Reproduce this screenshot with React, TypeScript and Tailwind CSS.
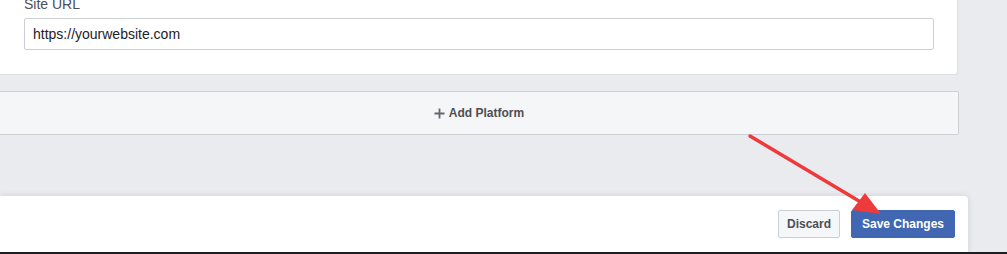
import React from 'react';

export default function App() {
    return (
        <div className="relative w-[1007px] h-[254px] overflow-hidden bg-[#e9ebee] font-['Liberation_Sans',Arial,sans-serif]">
            <div className="flex flex-col">

                {/* App settings card, scrolled so the label is clipped */}
                <div className="w-[958px] h-[75px] bg-white border border-t-0 border-l-0 border-[#dddfe2] rounded-br-[3px] px-6">
                    <div className="mt-[-4px] text-[14px] leading-[16px] text-[#4b4f56]">Site URL</div>
                    <div className="mt-[6px] h-[32px] w-[910px] border border-[#ccd0d5] rounded-[2px] flex items-center px-2 text-[14px] text-[#1d2129]">
                        https://yourwebsite.com
                    </div>
                </div>

                <button className="mt-[16px] w-[959px] h-[44px] bg-[#f5f6f7] border border-l-0 border-[#ccd0d5] rounded-r-[2px] flex items-center justify-center gap-1 text-[12px] font-bold text-[#4b4f56]">
                    <svg width="11" height="11" viewBox="0 0 11 11" className="mt-[1px]">
                        <path d="M5.5 0.5v10M0.5 5.5h10" stroke="#606770" strokeWidth="1.8" />
                    </svg>
                    <span>Add Platform</span>
                </button>

                {/* Sticky save bar */}
                <div className="mt-[61px] w-[968px] h-[56px] bg-white rounded-tr-[4px] shadow-[0_0_6px_rgba(0,0,0,0.12)] flex items-center justify-end gap-[11px] pr-[13px]">
                    <button className="h-[28px] w-[62px] bg-[#f5f6f7] border border-[#ccd0d5] rounded-[2px] text-[12px] font-bold text-[#4b4f56]">
                        Discard
                    </button>
                    <button className="h-[28px] w-[104px] bg-[#4267b2] border border-[#4267b2] rounded-[2px] text-[12px] font-bold text-white">
                        Save Changes
                    </button>
                </div>
                <div className="h-[3px] w-full bg-[#1c1e21]" />
            </div>

            {/* annotation arrow */}
            <svg className="absolute left-0 top-0 pointer-events-none" width="1007" height="254">
                <line x1="750" y1="136" x2="864" y2="204" stroke="#ee3a3a" strokeWidth="3.5" strokeLinecap="round" />
                <polygon points="881,214 852,210 865,193" fill="#ee3a3a" />
            </svg>
        </div>
    );
}
